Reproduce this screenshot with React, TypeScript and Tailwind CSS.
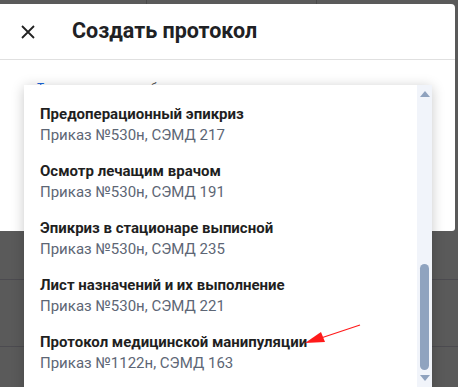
import React from "react";

const items = [
  { t: "Предоперационный эпикриз", s: "Приказ №530н, СЭМД 217" },
  { t: "Осмотр лечащим врачом", s: "Приказ №530н, СЭМД 191" },
  { t: "Эпикриз в стационаре выписной", s: "Приказ №530н, СЭМД 235" },
  { t: "Лист назначений и их выполнение", s: "Приказ №530н, СЭМД 221" },
  { t: "Протокол медицинской манипуляции", s: "Приказ №1122н, СЭМД 163" },
];

export default function App() {
  return (
    <div
      className="relative w-[458px] h-[387px] overflow-hidden bg-[#5a5a5a]"
      style={{ fontFamily: "Roboto, 'Noto Sans', sans-serif" }}
    >
      {/* background table */}
      <div className="flex h-[4px]">
        <div className="w-[147px] border-r border-[#4a4a4a]" />
        <div className="w-[170px] border-r border-[#4a4a4a]" />
      </div>
      <div className="absolute left-0 right-0 top-[279px] h-px bg-[#4c4b50]" />
      <div className="absolute left-0 right-0 top-[346px] h-px bg-[#4c4b50]" />

      {/* modal */}
      <div className="absolute left-0 top-[4px] w-[455px] h-[227px] bg-white rounded-tr-[4px] rounded-br-[3px]">
        <div className="flex items-center h-[56px] border-b border-[#e0e0e0]">
          <div className="w-[72px] pl-[21px]">
            <svg width="14" height="14" viewBox="0 0 14 14">
              <path d="M1 1L13 13M13 1L1 13" stroke="#222" strokeWidth="1.8" />
            </svg>
          </div>
          <div className="text-[21.5px] font-bold text-[#202124]">Создать протокол</div>
        </div>
        <div className="flex items-center gap-[24px] pl-[37px] pt-[19px] text-[12px]">
          <span className="text-[#1a66d9]">Тип протокола</span>
          <span className="text-[#555]">обязательно</span>
        </div>
      </div>

      {/* dropdown */}
      <div className="absolute left-[24px] top-[85px] w-[408px] h-[310px] bg-white shadow-[0_2px_12px_rgba(0,0,0,0.22)] flex">
        <div className="flex-1 flex flex-col pl-[16px] pt-[19px]">
          {items.map((it) => (
            <div key={it.t} className="h-[57px] flex flex-col">
              <div className="text-[15px] font-bold text-[#1f1f1f] leading-[21px]">{it.t}</div>
              <div className="text-[15px] text-[#5d6675] leading-[21px]">{it.s}</div>
            </div>
          ))}
        </div>
        <div className="w-[15px] bg-[#f1f4fa] flex flex-col items-center">
          <svg width="10" height="6" viewBox="0 0 10 6" className="mt-[6px]">
            <path d="M5 0L10 6H0Z" fill="#8fa2be" />
          </svg>
          <div className="mt-[167px] w-[9px] h-[106px] rounded-full bg-[#8fa3bf]" />
          <svg width="10" height="6" viewBox="0 0 10 6" className="mt-[5px]">
            <path d="M0 0H10L5 6Z" fill="#8fa2be" />
          </svg>
        </div>
      </div>

      {/* red arrow */}
      <svg className="absolute left-0 top-0" width="458" height="387">
        <line x1="360" y1="325" x2="318" y2="339" stroke="#ff1a1a" strokeWidth="1.3" />
        <path d="M305 343L321 332L325 342Z" fill="#ff1a1a" />
      </svg>
    </div>
  );
}
